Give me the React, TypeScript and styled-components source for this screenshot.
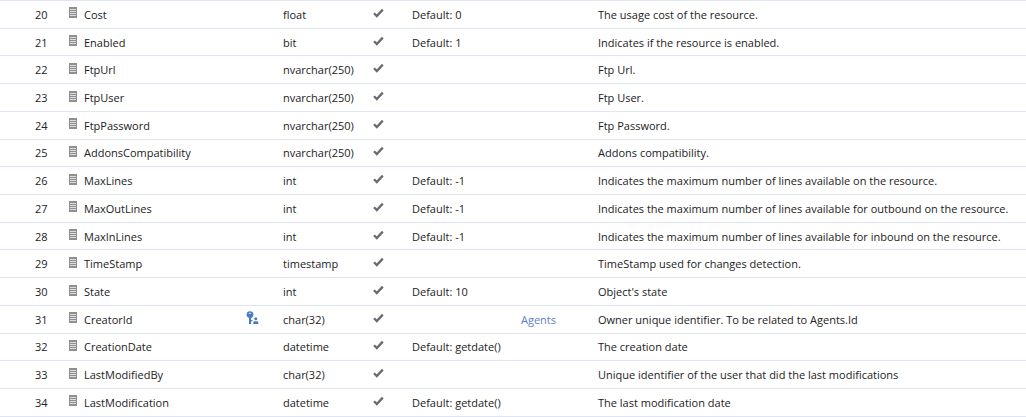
import React from "react";
import styled, { createGlobalStyle } from "styled-components";

const Global = createGlobalStyle`
  html, body { margin: 0; padding: 0; background: #fff; overflow: hidden; }
  body { font-family: "Open Sans", "Liberation Sans", sans-serif; }
`;

type Column = {
  id: number;
  name: string;
  type: string;
  info?: string;
  link?: string;
  fk?: boolean;
  desc: string;
};

const columns: Column[] = [
  { id: 20, name: "Cost", type: "float", info: "Default: 0", desc: "The usage cost of the resource." },
  { id: 21, name: "Enabled", type: "bit", info: "Default: 1", desc: "Indicates if the resource is enabled." },
  { id: 22, name: "FtpUrl", type: "nvarchar(250)", desc: "Ftp Url." },
  { id: 23, name: "FtpUser", type: "nvarchar(250)", desc: "Ftp User." },
  { id: 24, name: "FtpPassword", type: "nvarchar(250)", desc: "Ftp Password." },
  { id: 25, name: "AddonsCompatibility", type: "nvarchar(250)", desc: "Addons compatibility." },
  { id: 26, name: "MaxLines", type: "int", info: "Default: -1", desc: "Indicates the maximum number of lines available on the resource." },
  { id: 27, name: "MaxOutLines", type: "int", info: "Default: -1", desc: "Indicates the maximum number of lines available for outbound on the resource." },
  { id: 28, name: "MaxInLines", type: "int", info: "Default: -1", desc: "Indicates the maximum number of lines available for inbound on the resource." },
  { id: 29, name: "TimeStamp", type: "timestamp", desc: "TimeStamp used for changes detection." },
  { id: 30, name: "State", type: "int", info: "Default: 10", desc: "Object's state" },
  { id: 31, name: "CreatorId", type: "char(32)", link: "Agents", fk: true, desc: "Owner unique identifier. To be related to Agents.Id" },
  { id: 32, name: "CreationDate", type: "datetime", info: "Default: getdate()", desc: "The creation date" },
  { id: 33, name: "LastModifiedBy", type: "char(32)", desc: "Unique identifier of the user that did the last modifications" },
  { id: 34, name: "LastModification", type: "datetime", info: "Default: getdate()", desc: "The last modification date" },
];

const Table = styled.div`
  width: 1026px;
  border-top: 1px solid #e0e6f4;
`;

const Row = styled.div`
  display: grid;
  grid-template-columns: 35px 34px 15px 162px 37px 90px 39px 186px 1fr;
  align-items: center;
  height: 27.73px;
  box-sizing: border-box;
  border-bottom: 1px solid #dfe5f3;
  font-size: 11px;
  color: #222;
  white-space: nowrap;
`;

const Number = styled.div`
  grid-column: 2;
`;

const Cell = styled.div``;

const IconCell = styled.div`
  display: flex;
  align-items: center;
  height: 100%;
  padding-bottom: 3px;
  box-sizing: border-box;
`;

const LinkCell = styled.div`
  text-align: right;
  padding-right: 42px;
  color: #5b7fc7;
`;

const ColumnIcon = () => (
  <svg width="8" height="11" viewBox="0 0 8 11">
    <rect width="8" height="11" fill="#8f8f8f" />
    <path d="M1 2.5h6M1 4.5h6M1 6.5h6M1 8.5h6" stroke="#dedede" strokeWidth="1" />
  </svg>
);

const KeyIcon = () => (
  <svg width="13" height="14" viewBox="0 0 13 14">
    <circle cx="4" cy="3.6" r="3.4" fill="#4a7cc4" />
    <rect x="2.9" y="1.8" width="2.2" height="1.2" fill="#cfdcf0" />
    <path d="M3 6h2.1v7H3zM5 9h1.4v1.3H5z" fill="#4a7cc4" />
    <circle cx="9.8" cy="7.8" r="1.5" fill="#4a7cc4" />
    <path d="M7.3 13v-1.3c0-.8.7-1.4 1.4-1.4h2.2c.8 0 1.4.6 1.4 1.4V13z" fill="#4a7cc4" />
  </svg>
);

const CheckIcon = () => (
  <svg width="11" height="10" viewBox="0 0 11 10">
    <path d="M1 5.2 L3.8 8 L9.8 1.6" fill="none" stroke="#6b6b6b" strokeWidth="2.3" />
  </svg>
);

export default function App() {
  return (
    <>
      <Global />
      <Table>
        {columns.map((c) => (
          <Row key={c.id}>
            <Number>{c.id}</Number>
            <IconCell>
              <ColumnIcon />
            </IconCell>
            <Cell>{c.name}</Cell>
            <IconCell>{c.fk && <KeyIcon />}</IconCell>
            <Cell>{c.type}</Cell>
            <IconCell>
              <CheckIcon />
            </IconCell>
            {c.link ? <LinkCell>{c.link}</LinkCell> : <Cell>{c.info}</Cell>}
            <Cell>{c.desc}</Cell>
          </Row>
        ))}
      </Table>
    </>
  );
}
